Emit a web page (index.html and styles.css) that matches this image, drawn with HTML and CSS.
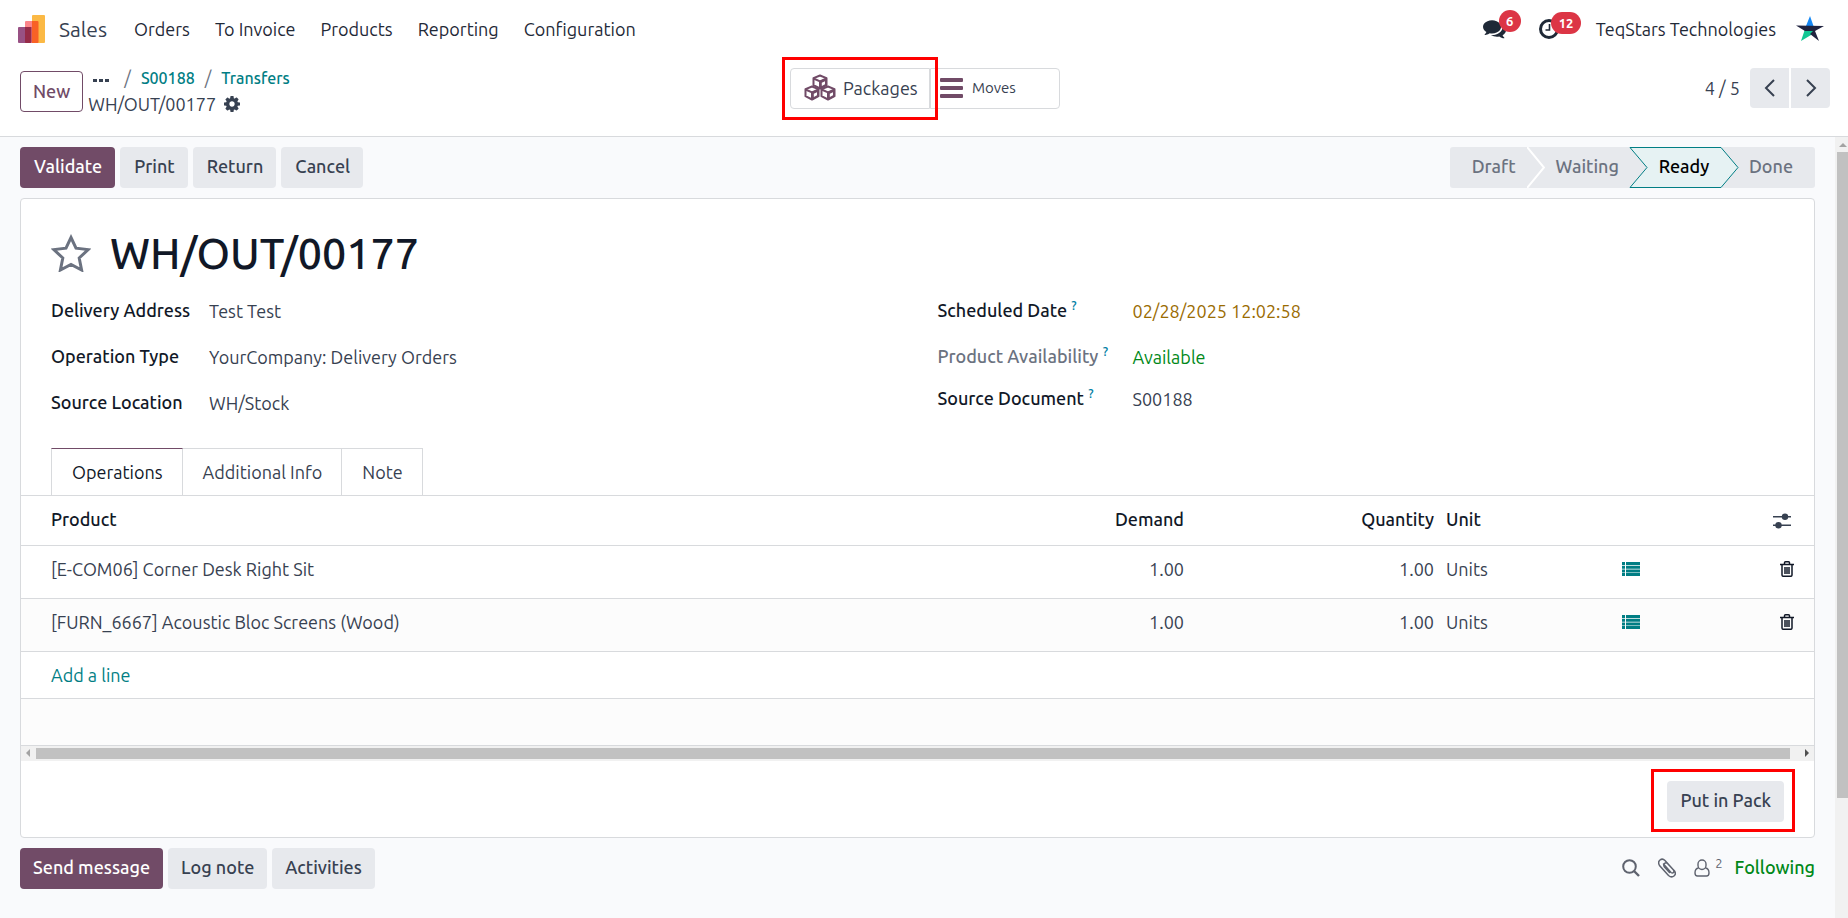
FILE: index.html
```html
<!DOCTYPE html>
<html lang="en">
<head>
<meta charset="utf-8">
<title>WH/OUT/00177 - Sales</title>
<link rel="stylesheet" href="styles.css">
</head>
<body>
<div class="app">
  <header class="topbar">
    <svg class="logo" viewBox="0 0 28 28" width="28" height="28" aria-hidden="true">
      <rect x="14" y="0" width="13" height="28" rx="1" fill="#fbb945"/>
      <rect x="7" y="6" width="13" height="22" rx="1" fill="#fc868b"/>
      <path d="M14 6h5.500a1 1 0 0 1 1 1v20a1 1 0 0 1-1 1H14z" fill="#f86126"/>
      <rect x="0" y="12" width="13" height="16" rx="1" fill="#985184"/>
      <path d="M7 12h6.500v15a1 1 0 0 1-1 1H8a1 1 0 0 1-1-1z" fill="#962b48"/>
    </svg>
    <span class="brand">Sales</span>
    <nav class="menu">
      <a href="#">Orders</a><a href="#">To Invoice</a><a href="#">Products</a><a href="#">Reporting</a><a href="#">Configuration</a>
    </nav>
    <div class="systray">
      <button class="tray" type="button" aria-label="Messages">
        <svg viewBox="0 0 1792 1792" width="23" height="23" fill="#1f2937"><path d="M1408 768q0 139-94 257t-256.500 186.500-353.500 68.500q-86 0-176-16-124 88-278 128-36 9-86 16h-3q-11 0-20.500-8t-11.500-21q-1-3-1-6.500t.5-6.500 2-6l2.500-5 3.500-5.500 4-5 4.500-5 4-4.500q5-6 23-25t26-29.500 22.500-29 25-38.500 20.500-44q-124-72-195-177t-71-224q0-139 94-257t256.500-186.500 353.500-68.500 353.500 68.500 256.500 186.500 94 257zm384 256q0 120-71 224.500t-195 176.500q10 24 20.500 44t25 38.500 22.500 29 26 29.500 23 25q1 1 4 4.500t4.500 5 4 5 3.500 5.500l2.500 5 2 6 .5 6.500-1 6.500q-3 14-13 22t-22 7q-50-7-86-16-154-40-278-128-90 16-176 16-271 0-472-132 58 4 88 4 161 0 309-45t264-129q125-92 192-212t67-254q0-77-23-152 129 71 204 178t75 230z"/></svg>
        <span class="badge">6</span>
      </button>
      <button class="tray tray-clock" type="button" aria-label="Activities">
        <svg viewBox="0 0 20 20" width="20" height="20" fill="none" stroke="#1f2937"><circle cx="10" cy="10" r="8.500" stroke-width="3"/><path d="M10.500 5v6H6.500" stroke-width="1.600"/></svg>
        <span class="badge">12</span>
      </button>
      <span class="company">TeqStars Technologies</span>
      <svg class="avatar" viewBox="0 0 28 26" width="28" height="26" aria-hidden="true">
        <path d="M14 0L17.500 10H10z" fill="#1688f5"/><path d="M9 13L14.500 15 19 14 15 19 5 25z" fill="#12c794"/>
        <path d="M0 9.500L28 10 19 15 23 25 14 18 17 15 9 15z" fill="#20233f"/>
      </svg>
    </div>
  </header>

  <div class="control">
    <div class="control-left">
      <button class="btn btn-outline" type="button">New</button>
      <div class="crumbs">
        <div class="crumb-line"><button class="dots" type="button" aria-label="More"><i></i><i></i><i></i></button><span class="sep">/</span><a href="#">S00188</a><span class="sep">/</span><a href="#">Transfers</a></div>
        <div class="crumb-line current"><span>WH/OUT/00177</span>
          <button class="icon-btn" type="button" aria-label="Actions"><svg viewBox="0 0 1536 1536" width="16" height="16" fill="#374151"><path d="M1024 768q0-106-75-181t-181-75-181 75-75 181 75 181 181 75 181-75 75-181zm512-109v222q0 12-8 23t-20 13l-185 28q-19 54-39 91 35 50 107 138 10 12 10 25t-9 23q-27 37-99 108t-94 71q-12 0-26-9l-138-108q-44 23-91 38-16 136-29 186-7 28-36 28H657q-14 0-24.500-8.500T621 1506l-28-184q-49-16-90-37l-141 107q-10 9-25 9-14 0-25-11-126-114-165-168-7-10-7-23 0-12 8-23 15-21 51-66.500t54-70.500q-27-50-41-99L29 913q-13-2-21-12.500T0 877V655q0-12 8-23t19-13l186-28q14-46 39-92-40-57-107-138-10-12-10-24 0-10 9-23 26-36 98.500-107.500T337 135q13 0 26 10l138 107q44-23 91-38 16-136 29-186 7-28 36-28h222q14 0 24.500 8.500T915 30l28 184q49 16 90 37l142-107q9-9 24-9 13 0 25 10 129 119 165 170 7 8 7 22 0 12-8 23-15 21-51 66.500t-54 70.500q26 50 41 98l183 28q13 2 21 12.500t8 23.500z"/></svg></button>
        </div>
      </div>
    </div>
    <div class="stats">
      <div class="mark-wrap">
        <button class="stat stat-first" type="button">
          <svg viewBox="0 0 32 27" width="32" height="27" fill="#fff" stroke="#714b67" stroke-width="2" stroke-linejoin="round"><g id="cube"><path d="M16 1.500l6.500 2.700v7L16 14.500l-6.500-3.300v-7z"/><path d="M16 7.500l6.500-3v6.700L16 14.500z" fill="#714b67" stroke-width="1"/><path d="M17.800 8.800l3.200-1.500v3L17.800 12z" stroke="none"/><path d="M9.500 4.500L16 7.300l6.500-2.800M16 7.300v7" fill="none"/></g><use href="#cube" x="-8" y="11"/><use href="#cube" x="8" y="11"/></svg>
          <span>Packages</span>
        </button>
        <span class="mark" aria-hidden="true"></span>
      </div>
      <button class="stat stat-last" type="button">
        <svg viewBox="0 0 23 20" width="23" height="20" fill="#714b67"><rect width="23" height="4" rx="1"/><rect y="8" width="23" height="4" rx="1"/><rect y="16" width="23" height="4" rx="1"/></svg>
        <span>Moves</span>
      </button>
    </div>
    <div class="pager">
      <span>4 / 5</span>
      <div class="pager-btns">
        <button type="button" aria-label="Previous"><svg viewBox="0 0 12 18" width="12" height="18"><path d="M10 1L2 9l8 8"/></svg></button>
        <button type="button" aria-label="Next"><svg viewBox="0 0 12 18" width="12" height="18"><path d="M2 1l8 8-8 8"/></svg></button>
      </div>
    </div>
  </div>

  <div class="body">
    <main class="content">
      <div class="actions">
        <div class="btn-row">
          <button class="btn btn-primary" type="button">Validate</button>
          <button class="btn" type="button">Print</button>
          <button class="btn" type="button">Return</button>
          <button class="btn" type="button">Cancel</button>
        </div>
        <div class="status">
          <button class="step step-draft" type="button">Draft</button>
          <svg class="chev" viewBox="0 0 18 41" width="18" height="41"><path d="M0 0l17 20.500L0 41" fill="none" stroke="#fff" stroke-width="2"/></svg>
          <button class="step step-wait" type="button">Waiting</button>
          <div class="step-active">
            <svg viewBox="0 0 110 41" width="110" height="41" aria-hidden="true"><path d="M1 .5h91l17 20-17 20H1l17-20z" fill="#e6f2f3" stroke="#017e84"/></svg>
            <button class="step" type="button" aria-current="step">Ready</button>
          </div>
          <button class="step step-done" type="button">Done</button>
        </div>
      </div>

      <section class="sheet">
        <div class="title-row">
          <button class="icon-btn" type="button" aria-label="Favorite"><svg viewBox="0 0 40 38" width="40" height="38"><path d="M20 3.500l5 10.700 12.200 1.400-9 8.400 2.400 12L20 30.500 9.400 36l2.400-12-9-8.400L15 14.200z" fill="none" stroke="#6b7280" stroke-width="3"/></svg></button>
          <h1>WH/OUT/00177</h1>
        </div>
        <div class="fields">
          <dl class="group group-left">
            <dt>Delivery Address</dt><dd>Test Test</dd>
            <dt>Operation Type</dt><dd>YourCompany: Delivery Orders</dd>
            <dt>Source Location</dt><dd>WH/Stock</dd>
          </dl>
          <dl class="group group-right">
            <dt>Scheduled Date <sup>?</sup></dt><dd class="warn">02/28/2025 12:02:58</dd>
            <dt class="muted">Product Availability <sup>?</sup></dt><dd class="good">Available</dd>
            <dt>Source Document <sup>?</sup></dt><dd>S00188</dd>
          </dl>
        </div>
        <div class="tabs" role="tablist">
          <button class="tab active" role="tab" aria-selected="true" type="button">Operations</button>
          <button class="tab" role="tab" type="button">Additional Info</button>
          <button class="tab" role="tab" type="button">Note</button>
        </div>
        <table class="lines">
          <colgroup><col><col class="c-demand"><col class="c-qty"><col class="c-unit"><col class="c-list"><col class="c-end"></colgroup>
          <thead><tr><th>Product</th><th class="num">Demand</th><th class="num">Quantity</th><th>Unit</th><th></th>
            <th class="end"><button class="icon-btn opt" type="button" aria-label="Columns"><svg viewBox="0 0 18 16" width="18" height="16" fill="#374151"><rect y="3" width="18" height="1.500"/><rect y="11.500" width="18" height="1.500"/><circle cx="12" cy="3.700" r="3.200"/><circle cx="5.500" cy="12.200" r="3.200"/></svg></button></th></tr></thead>
          <tbody>
            <tr><td>[E-COM06] Corner Desk Right Sit</td><td class="num">1.00</td><td class="num">1.00</td><td>Units</td>
              <td><button class="icon-btn" type="button" aria-label="Details"><svg class="ic-list" viewBox="0 0 18 14" width="18" height="14"><path d="M0 1.500h3M4 1.500h14M0 5.200h3M4 5.200h14M0 8.900h3M4 8.900h14M0 12.600h3M4 12.600h14"/></svg></button></td>
              <td class="end"><button class="icon-btn" type="button" aria-label="Delete"><svg class="ic-trash" viewBox="0 0 14 16" width="14" height="16"><path d="M0 3.500h14M4.500 3V1.800q0-1 1-1h3q1 0 1 1V3M2 4v10q0 1.300 1.300 1.300h7.400Q12 15.300 12 14V4M5 6v7M7 6v7M9 6v7"/></svg></button></td></tr>
            <tr class="alt"><td>[FURN_6667] Acoustic Bloc Screens (Wood)</td><td class="num">1.00</td><td class="num">1.00</td><td>Units</td>
              <td><button class="icon-btn" type="button" aria-label="Details"><svg class="ic-list" viewBox="0 0 18 14" width="18" height="14"><path d="M0 1.500h3M4 1.500h14M0 5.200h3M4 5.200h14M0 8.900h3M4 8.900h14M0 12.600h3M4 12.600h14"/></svg></button></td>
              <td class="end"><button class="icon-btn" type="button" aria-label="Delete"><svg class="ic-trash" viewBox="0 0 14 16" width="14" height="16"><path d="M0 3.500h14M4.500 3V1.800q0-1 1-1h3q1 0 1 1V3M2 4v10q0 1.300 1.300 1.300h7.400Q12 15.300 12 14V4M5 6v7M7 6v7M9 6v7"/></svg></button></td></tr>
            <tr class="short"><td colspan="6"><a href="#">Add a line</a></td></tr>
            <tr class="short alt"><td colspan="6"></td></tr>
          </tbody>
        </table>
        <div class="hscroll" aria-hidden="true"><i class="arrow-l"></i><span></span><i class="arrow-r"></i></div>
        <div class="pack">
          <div class="mark-wrap">
            <button class="btn" type="button">Put in Pack</button>
            <span class="mark" aria-hidden="true"></span>
          </div>
        </div>
      </section>

      <div class="chatter">
        <div class="btn-row">
          <button class="btn btn-primary" type="button">Send message</button>
          <button class="btn" type="button">Log note</button>
          <button class="btn" type="button">Activities</button>
        </div>
        <div class="chatter-right">
          <button class="icon-btn" type="button" aria-label="Search"><svg viewBox="0 0 18 18" width="18" height="18" fill="none" stroke="#5f636f" stroke-width="2"><circle cx="7.500" cy="7.500" r="6.300"/><path d="M12 12l5 5" stroke-width="2.400"/></svg></button>
          <button class="icon-btn" type="button" aria-label="Attach"><svg viewBox="0 0 18 20" width="18" height="20" fill="none" stroke="#5f636f" stroke-width="1.500" stroke-linecap="round"><path d="M5.500 6l7.500 8.500q1.500 1 2.500 0t0-2.500L7 2.500Q4.500 0 2 2T1.500 7.500l9 10q3 2.500 5.500.5t.5-5L9.500 5.500Q8 4 6.500 5.500t0 3.500l5 5.500"/></svg></button>
          <button class="icon-btn followers" type="button" aria-label="Followers"><svg viewBox="0 0 16 18" width="16" height="18" fill="none" stroke="#5f636f" stroke-width="1.400"><rect x="4" y="1" width="8" height="9.500" rx="4"/><path d="M4.500 9Q1 9.500 1 14q0 3 2.500 3h9Q15 17 15 14q0-4.500-3.500-5"/></svg><sup>2</sup></button>
          <button class="following" type="button">Following</button>
        </div>
      </div>
    </main>
    <div class="vscroll" aria-hidden="true"><i></i><span></span></div>
  </div>
</div>
</body>
</html>
```
FILE: styles.css
```css
* { box-sizing: border-box; }
body { margin: 0; background: #fff; color: #374151; font: 18px/24px Ubuntu, "Noto Sans", sans-serif; }
button { font: inherit; color: inherit; border: 0; background: none; padding: 0; margin: 0; }
a { color: #017e84; text-decoration: none; }
svg { display: block; flex: none; }
.app { min-height: 100vh; display: flex; flex-direction: column; }

.topbar { display: flex; align-items: center; height: 57px; padding: 0 24px 0 18px; margin-bottom: 1px; }
.brand { font-size: 21px; margin-left: 13px; }
.menu { display: flex; gap: 25px; margin-left: 27px; }
.menu a { color: #1f2937; }
.systray { display: flex; align-items: center; margin-left: auto; color: #1f2937; }
.tray { position: relative; margin-right: 33px; }
.tray-clock { margin-right: 37px; }
.badge { position: absolute; top: -7px; left: 16px; min-width: 22px; height: 22px; padding: 0 7px; border-radius: 11px; background: #dc3545; color: #fff; font-size: 13px; line-height: 22px; font-weight: 700; }
.tray-clock .badge { left: 12px; padding: 0 8px; }
.avatar { margin-left: 20px; }

.control { display: grid; grid-template-columns: 1fr auto 1fr; align-items: start; height: 79px; padding: 10px 18px 0 20px; border-bottom: 1px solid #d8dadd; }
.control-left { display: flex; gap: 5px; }
.btn { height: 41px; padding: 0 13px 2px; border-radius: 4px; background: #e7e9ed; color: #374151; font-weight: 500; }
.actions .btn { padding: 0 13px 3px 14px; }
.btn.btn-primary { background: #714b67; color: #fff; }
.btn-outline { background: #fff; border: 1px solid #714b67; color: #714b67; margin-top: 3px; padding: 0 12px 1px; }
.crumbs { margin-top: -3px; }
.crumb-line { display: flex; align-items: center; height: 26px; }
.crumb-line a { font-weight: 500; font-size: 16px; }
.crumb-line .sep { padding: 0 10px; color: #6b7280; }
.dots { display: flex; gap: 2px; padding: 4px 5px 0; }
.dots i { width: 4px; height: 3px; background: #374151; }
.icon-btn { display: inline-flex; vertical-align: middle; }
.current { gap: 8px; }
.stats { display: flex; }
.mark-wrap { position: relative; }
.mark { position: absolute; border: 3px solid #f00; pointer-events: none; }
.stats .mark { inset: -11px -8px; }
.stat { display: flex; align-items: center; height: 41px; padding-bottom: 2px; border: 1px solid #d8dadd; color: #374151; }
.stat-first { width: 140px; gap: 7px; padding-left: 13px; border-radius: 4px 0 0 4px; }
.stat-last { width: 130px; gap: 9px; padding-left: 9px; font-size: 15px; border-radius: 0 4px 4px 0; }
.pager { display: flex; align-items: center; justify-content: flex-end; gap: 10px; }
.pager-btns { display: flex; gap: 2px; }
.pager-btns button { display: flex; align-items: center; justify-content: center; width: 39px; height: 40px; background: #e7e9ed; border-radius: 4px 0 0 4px; }
.pager-btns button + button { border-radius: 0 4px 4px 0; }
.pager-btns path { fill: none; stroke: #374151; stroke-width: 2; }

.body { flex: 1; display: flex; background: #f9fafc; }
.content { flex: 1; padding: 10px 20px 28px; }
.actions, .chatter { display: flex; justify-content: space-between; align-items: center; }
.btn-row { display: flex; gap: 5px; }
.status { display: flex; height: 41px; background: #e7e9ed; border-radius: 3px; }
.step { color: #6b7280; font-weight: 500; padding-bottom: 3px; }
.step-draft { padding: 0 11px 3px 22px; }
.step-wait { padding: 0 10px 3px 11px; }
.step-done { padding: 0 22px 3px 10px; }
.step-active { display: grid; }
.step-active > * { grid-area: 1 / 1; }
.step-active .step { color: #000; }

.sheet { margin: 10px 0; background: #fff; border: 1px solid #d8dadd; border-radius: 4px; }
.title-row { display: flex; align-items: center; gap: 19px; padding: 25px 30px 0; height: 83px; }
h1 { margin: 0; font-size: 43px; line-height: 54px; font-weight: 500; color: #111827; }
.fields { display: grid; grid-template-columns: 1fr 1fr; padding: 16px 30px 0; margin-bottom: 12px; }
.group { display: grid; margin: 0; align-content: start; grid-auto-rows: 46px; }
.group-left { grid-template-columns: 158px 1fr; }
.group-right { grid-template-columns: 195px 1fr; padding-left: 20px; grid-template-rows: 46px 42px; }
dt { font-weight: 500; color: #111827; white-space: nowrap; }
dd { margin: 0; padding-top: 1px; }
dt.muted { color: #6b7280; }
dt sup, .followers sup { font-size: 13px; line-height: 1; }
dt sup { color: #0180a5; }
.warn { color: #9a6b01; }
.good { color: #008818; }

.tabs { display: flex; padding-left: 30px; border-bottom: 1px solid #d8dadd; }
.tab { height: 47px; padding: 0 19px 1px 20px; border: 1px solid #d8dadd; border-width: 1px 1px 0 0; }
.tab.active { color: #111827; border-left-width: 1px; border-top-color: #714b67; }
.lines { width: 100%; border-collapse: collapse; table-layout: fixed; }
.c-demand { width: 232px; }
.c-qty { width: 250px; }
.c-unit { width: 176px; }
.c-list { width: 92px; }
.c-end { width: 106px; }
.lines th, .lines td { padding: 11px 6px 0; text-align: left; vertical-align: top; border-bottom: 1px solid #d8dadd; }
.lines th { height: 49px; color: #111827; font-weight: 500; }
.lines td { height: 53px; }
.lines .short td { height: 47px; }
.lines th:first-child, .lines td:first-child { padding-left: 30px; }
.lines .num { text-align: right; }
.lines .end { text-align: right; padding-right: 20px; }
.lines td .icon-btn { padding-bottom: 3px; }
.lines .alt { background: #fcfcfc; }
.opt { margin-right: 3px; }
.ic-list { fill: none; stroke: #017e84; stroke-width: 3; }
.ic-trash { fill: none; stroke: #111827; stroke-width: 1.500; }
.hscroll { display: flex; align-items: center; height: 15px; background: #f1f1f1; padding: 0 5px; }
.hscroll span { flex: 1; height: 11px; margin: 0 15px 0 6px; background: #c1c1c1; }
.hscroll i, .vscroll i { border: 4px solid transparent; }
.hscroll .arrow-l { border-left-width: 0; border-right-color: #a3a3a3; }
.hscroll .arrow-r { border-right-width: 0; border-left-color: #505050; }
.pack { display: flex; justify-content: flex-end; padding: 20px 30px 15px; }
.pack .mark { inset: -12px -11px -10px -16px; }
.chatter-right { display: flex; align-items: center; gap: 18px; color: #5f636f; }
.followers { gap: 5px; margin-right: -6px; }
.followers sup { margin-top: -2px; }
.following { color: #008818; font-weight: 500; padding-bottom: 2px; }
.vscroll { display: flex; flex-direction: column; align-items: center; width: 13px; padding: 3px 0 0 2px; background: #f1f1f1; }
.vscroll i { border-top-width: 0; border-bottom-color: #a3a3a3; margin: 3px 0 5px; }
.vscroll span { width: 100%; height: 83%; background: #c1c1c1; }
```
